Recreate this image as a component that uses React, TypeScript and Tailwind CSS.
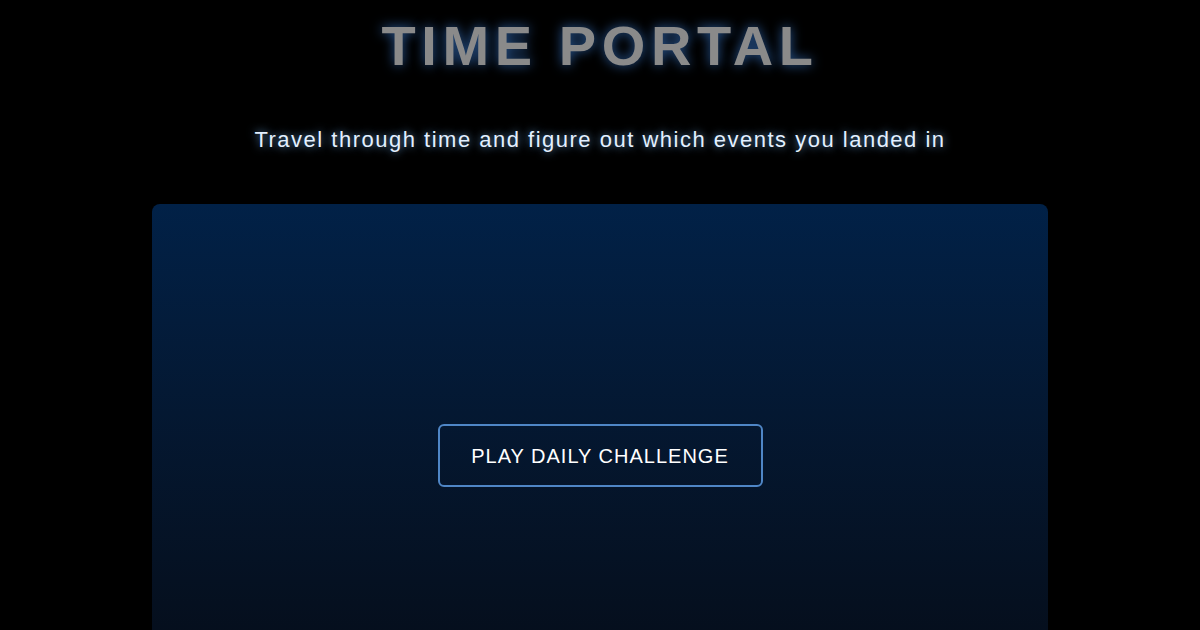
export default function App() {
  return (
    <div
      className="h-[630px] w-full overflow-hidden bg-black"
      style={{ fontFamily: '"Liberation Sans", Arial, sans-serif' }}
    >
      <div className="flex flex-col items-center">
        <h1 className="mt-[11px] text-[56px] font-bold leading-[70px] tracking-[0.1em] text-[#8a8a8a] [text-shadow:0_0_12px_rgba(70,150,255,0.6)]">
          TIME PORTAL
        </h1>
        <p className="mt-[41px] text-[22px] leading-[36px] tracking-[1.5px] text-[#e3f0ff] [text-shadow:0_0_8px_rgba(120,190,255,0.8)]">
          Travel through time and figure out which events you landed in
        </p>
        <section className="mt-[46px] flex h-[520px] w-[896px] flex-col items-center rounded-lg bg-gradient-to-b from-[#012147] to-[#050b15] pt-[220px]">
          <button className="h-[63px] w-[325px] rounded-md border-2 border-[#4f86c6] text-[20px] tracking-[0.05em] text-white">
            PLAY DAILY CHALLENGE
          </button>
        </section>
      </div>
    </div>
  );
}
